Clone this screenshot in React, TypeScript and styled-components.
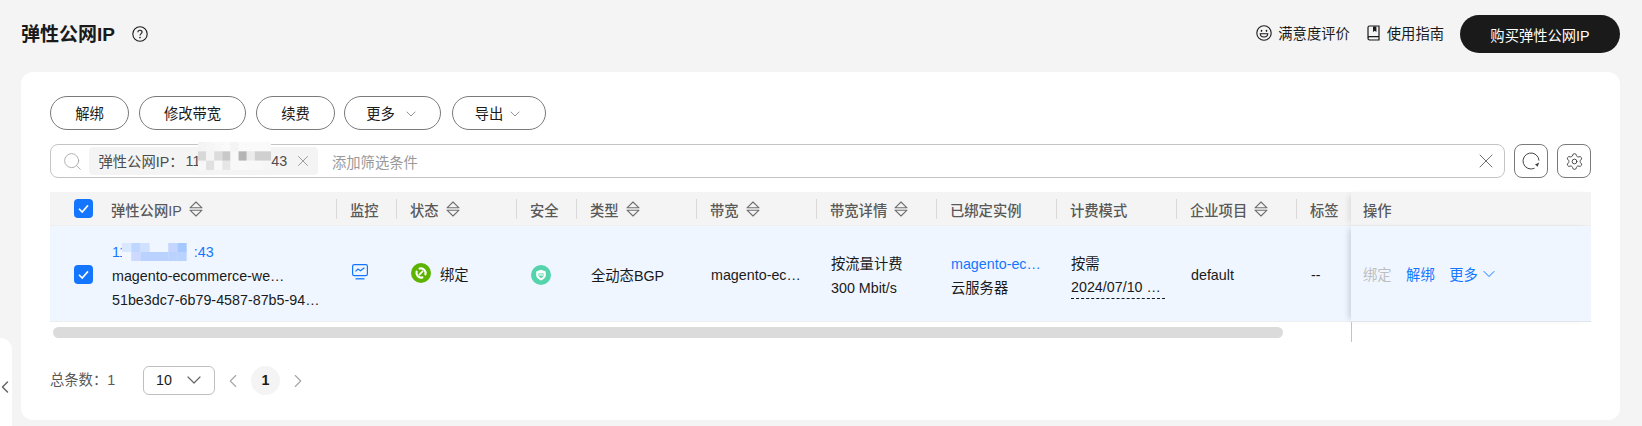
import { createGlobalStyle, styled } from "styled-components";
import { ChevronDown, ChevronLeft, ChevronRight, Search, Settings, X } from "lucide-react";

const GlobalStyle = createGlobalStyle`
html, body {
  margin: 0;
  padding: 0;
  background: #f4f4f4;
}
body {
  font-family: "Liberation Sans", "Noto Sans CJK SC", sans-serif;
  font-size: 14.3px;
  color: #1a1a1a;
}
* {
  box-sizing: border-box;
}
`;

const TAG_MOSAIC = [
  "#f4f4f4", "#f6f6f6", "#f8f8f8", "#fafafa", "#f4f4f4", "#fafafa", "#fafafa", "#fafafa", "#fafafa",
  "#d8d8d8", "#f5f5f5", "#dcdcdc", "#c8c8c8", "#f8f8f8", "#b5b5b5", "#ebebeb", "#d0d0d0", "#d0d0d0",
  "#f7f7f7", "#e0e0e0", "#f8f8f8", "#e6e6e6", "#f8f8f8", "#f9f9f9", "#f8f8f8", "#f8f8f8", "#f6f6f6",
];
const ROW_MOSAIC = [
  "#d9e8ff", "#bfd7ff", "#d0e0ff", "#eff6ff", "#eff6ff", "#c5d5ff", "#a5c8ff", "#f2f6ff",
  "#f3f7ff", "#cfd8ff", "#b9d2ff", "#b9d2ff", "#b9d2ff", "#b9d2ff", "#b9d2ff", "#f0f5ff",
];

const Mosaic = ({ cells, cols, w, h }: { cells: string[]; cols: number; w: number; h: number }) => {
  const rows = Math.ceil(cells.length / cols);
  return (
    <MosaicBox width={w} height={h} viewBox={`0 0 ${cols} ${rows}`} preserveAspectRatio="none">
      {cells.map((c, i) => (
        <rect key={i} x={i % cols} y={Math.floor(i / cols)} width="1.02" height="1.02" fill={c} />
      ))}
    </MosaicBox>
  );
};

const SortIcon = () => (
  <SortSvg width="14" height="16" viewBox="0 0 14 16">
    <path d="M7 1 13 6.8H1Z M1 9.2H13L7 15Z" fill="none" stroke="#6e6e6e" strokeWidth="1.1" strokeLinejoin="round" />
  </SortSvg>
);

const Check = () => (
  <CheckBox>
    <svg width="13" height="13" viewBox="0 0 13 13">
      <path d="M2 6.8 5.2 10 11 3.4" fill="none" stroke="#fff" strokeWidth="1.6" />
    </svg>
  </CheckBox>
);

const columns = [
  { w: 60, label: "监控" },
  { w: 120, label: "状态", sort: true },
  { w: 60, label: "安全" },
  { w: 120, label: "类型", sort: true },
  { w: 120, label: "带宽", sort: true },
  { w: 120, label: "带宽详情", sort: true },
  { w: 120, label: "已绑定实例" },
  { w: 120, label: "计费模式" },
  { w: 120, label: "企业项目", sort: true },
  { w: 54, label: "标签" },
];

const App = () => {
  return (
    <>
      <GlobalStyle />
      <Page>
        <TopBar>
          <TitleGroup>
            <Title>弹性公网IP</Title>
            <svg width="16" height="16" viewBox="0 0 16 16">
              <circle cx="8" cy="8" r="7.2" fill="none" stroke="#1a1a1a" strokeWidth="1.1" />
              <path d="M5.9 6.2C5.9 3.6 10.1 3.6 10.1 6.1 10.1 7.7 8 7.7 8 9.6" fill="none" stroke="#1a1a1a" strokeWidth="1.1" />
              <circle cx="8" cy="11.6" r=".8" fill="#1a1a1a" />
            </svg>
          </TitleGroup>
          <TopActions>
            <TopLink>
              <svg width="16" height="16" viewBox="0 0 16 16">
                <circle cx="8" cy="8" r="7.2" fill="none" stroke="#1a1a1a" strokeWidth="1.1" />
                <ellipse cx="5.5" cy="5.8" rx=".8" ry="1.1" fill="#1a1a1a" />
                <ellipse cx="10.5" cy="5.8" rx=".8" ry="1.1" fill="#1a1a1a" />
                <path d="M4.2 8.8H11.8C11.6 13 4.4 13 4.2 8.8Z" fill="none" stroke="#1a1a1a" strokeWidth="1.1" />
              </svg>
              满意度评价
            </TopLink>
            <TopLink>
              <svg width="15" height="16" viewBox="0 0 15 16">
                <path d="M2 13.2V2.6C2 1.7 2.6 1 3.5 1H13V15H3.6C2.7 15 2 14.2 2 13.2 2 12.2 2.7 11.6 3.6 11.6H13" fill="none" stroke="#1a1a1a" strokeWidth="1.2" />
                <path d="M7 1.5V7L8.7 5.8 10.4 7V1.5Z" fill="#1a1a1a" />
              </svg>
              使用指南
            </TopLink>
            <BuyButton>购买弹性公网IP</BuyButton>
          </TopActions>
        </TopBar>

        <Card>
          <Toolbar>
            <PillButton $w={79}>解绑</PillButton>
            <PillButton $w={107}>修改带宽</PillButton>
            <PillButton $w={79}>续费</PillButton>
            <PillButton $w={97} $shift={-1}>
              更多 <ChevronDown size={16} strokeWidth={1.2} color="#777" />
            </PillButton>
            <PillButton $w={94} $shift={1}>
              导出<ChevronDown size={16} strokeWidth={1.2} color="#777" />
            </PillButton>
          </Toolbar>

          <SearchRow>
            <SearchBox>
              <Search size={21} strokeWidth={1} color="#a6a6a6" />
              <FilterTag>
                <FilterName>弹性公网IP：</FilterName>
                11
                <Mosaic cells={TAG_MOSAIC} cols={9} w={73} h={28} />
                43
                <X size={18} strokeWidth={1} color="#808080" />
              </FilterTag>
              <Placeholder>添加筛选条件</Placeholder>
              <ClearIcon>
                <X size={24} strokeWidth={1} color="#707070" />
              </ClearIcon>
            </SearchBox>
            <IconButton>
              <svg width="20" height="20" viewBox="0 0 20 20">
                <path d="M13.5 17.2A8 8 0 1 1 18 9.6" fill="none" stroke="#444" strokeWidth="1" />
                <path d="M18.2 11.6 16.6 15.8 14 13.6Z" fill="#444" />
              </svg>
            </IconButton>
            <IconButton>
              <Settings size={19} strokeWidth={1.2} color="#444" />
            </IconButton>
          </SearchRow>

          <TableShell>
            <ScrollPart>
              <HeadRow>
                <HeadCell $w={287} $first>
                  <Check />
                  <HeadLabel>弹性公网IP</HeadLabel>
                  <SortIcon />
                </HeadCell>
                {columns.map((c) => (
                  <HeadCell key={c.label} $w={c.w}>
                    <HeadLabel>{c.label}</HeadLabel>
                    {c.sort && <SortIcon />}
                  </HeadCell>
                ))}
              </HeadRow>
              <BodyRow>
                <BodyCell $w={287} $first>
                  <Check />
                  <IpStack>
                    <LinkText>
                      11
                      <Mosaic cells={ROW_MOSAIC} cols={8} w={74} h={18} />
                      :43
                    </LinkText>
                    <span>magento-ecommerce-we…</span>
                    <span>51be3dc7-6b79-4587-87b5-94…</span>
                  </IpStack>
                </BodyCell>
                <BodyCell $w={60}>
                  <MonitorSvg width="16" height="16" viewBox="0 0 16 16">
                    <rect x=".6" y=".6" width="14.8" height="11" rx="1.6" fill="none" stroke="#1476ff" strokeWidth="1.2" />
                    <path d="M3.5 7.4 6 5 8.5 6.8 12.4 3.8" fill="none" stroke="#1476ff" strokeWidth="1.2" />
                    <path d="M3.5 14.8H12.5" stroke="#1476ff" strokeWidth="1.3" />
                  </MonitorSvg>
                </BodyCell>
                <BodyCell $w={120}>
                  <StatusWrap>
                    <svg width="20" height="20" viewBox="0 0 20 20">
                      <circle cx="10" cy="10" r="10" fill="#5cb300" />
                      <path d="M8.6 5.6A4.7 4.7 0 0 1 14.4 11.4 M11.4 14.4A4.7 4.7 0 0 1 5.6 8.6" fill="none" stroke="#fff" strokeWidth="2.1" strokeLinecap="round" />
                      <path d="M8.4 11.6 11.6 8.4" stroke="#fff" strokeWidth="1.6" strokeLinecap="round" />
                    </svg>
                    绑定
                  </StatusWrap>
                </BodyCell>
                <BodyCell $w={60}>
                  <svg width="20" height="20" viewBox="0 0 20 20">
                    <circle cx="10" cy="10" r="10" fill="#55d4ac" />
                    <path d="M10 4.8 14.8 6.4V10C14.8 12.8 12.6 14.4 10 15.4 7.4 14.4 5.2 12.8 5.2 10V6.4Z" fill="#fff" />
                    <path d="M7.2 8.6H12.8V10C12.6 11.4 11.4 12.4 10 13 8.6 12.4 7.4 11.4 7.2 10Z" fill="#55d4ac" />
                    <path d="M7.4 10H12.6" stroke="#fff" strokeWidth="1.2" />
                  </svg>
                </BodyCell>
                <BodyCell $w={120}>全动态BGP</BodyCell>
                <BodyCell $w={120}>magento-ec…</BodyCell>
                <BodyCell $w={120}>
                  <Stack>
                    <span>按流量计费</span>
                    <span>300 Mbit/s</span>
                  </Stack>
                </BodyCell>
                <BodyCell $w={120}>
                  <Stack>
                    <LinkLine>magento-ec…</LinkLine>
                    <span>云服务器</span>
                  </Stack>
                </BodyCell>
                <BodyCell $w={120}>
                  <Stack>
                    <span>按需</span>
                    <DateText>2024/07/10 …</DateText>
                  </Stack>
                </BodyCell>
                <BodyCell $w={120}>default</BodyCell>
                <BodyCell $w={54}>--</BodyCell>
              </BodyRow>
              <ScrollTrack>
                <ScrollThumb />
              </ScrollTrack>
            </ScrollPart>
            <FixedPart>
              <FixedHead>操作</FixedHead>
              <FixedBody>
                <OpDisabled>绑定</OpDisabled>
                <OpLink>解绑</OpLink>
                <OpLink>
                  更多
                  <ChevronDown size={20} strokeWidth={1.2} />
                </OpLink>
              </FixedBody>
              <FixedTail />
            </FixedPart>
          </TableShell>

          <Pager>
            <Total>总条数：1</Total>
            <PageSize>
              10
              <ChevronDown size={24} strokeWidth={1.2} color="#666" />
            </PageSize>
            <PagerArrow>
              <ChevronLeft size={22} strokeWidth={1.2} color="#a6a6a6" />
            </PagerArrow>
            <CurrentPage>1</CurrentPage>
            <PagerArrow>
              <ChevronRight size={22} strokeWidth={1.2} color="#a6a6a6" />
            </PagerArrow>
          </Pager>
        </Card>

        <SideTab>
          <ChevronLeft size={20} strokeWidth={1.8} color="#666" />
        </SideTab>
      </Page>
    </>
  );
};

export default App;

const Page = styled.div`
  position: relative;
  width: 1642px;
  height: 426px;
  overflow: hidden;
  background: #f4f4f4;
`;

const TopBar = styled.div`
  height: 72px;
  padding: 15px 22px 0 21px;
  display: flex;
  justify-content: space-between;
  align-items: flex-start;
`;

const TitleGroup = styled.div`
  height: 38px;
  display: flex;
  align-items: center;
  gap: 17px;
`;

const Title = styled.div`
  font-size: 19px;
  font-weight: 700;
  color: #1a1a1a;
  margin-bottom: 3px;
`;

const TopActions = styled.div`
  display: flex;
  align-items: center;
`;

const TopLink = styled.div`
  display: flex;
  align-items: center;
  gap: 6px;
  margin-right: 16px;
  height: 38px;
  padding-bottom: 3px;
`;

const BuyButton = styled.div`
  width: 160px;
  height: 38px;
  border-radius: 19px;
  background: #1a1a1a;
  color: #fff;
  display: flex;
  align-items: center;
  justify-content: center;
`;

const Card = styled.div`
  margin: 0 22px 0 21px;
  height: 348px;
  padding: 24px 29px 0 29px;
  background: #fff;
  border-radius: 12px;
`;

const Toolbar = styled.div`
  display: flex;
  gap: 10px;
  height: 34px;
`;

const PillButton = styled.div<{ $w: number; $shift?: number }>`
  width: ${(p) => p.$w}px;
  height: 34px;
  margin-left: ${(p) => p.$shift ?? 0}px;
  border: 1px solid #7a7a7a;
  border-radius: 17px;
  display: flex;
  align-items: center;
  justify-content: center;
  gap: 2px;
  white-space: pre;
  padding-bottom: 2px;
  svg {
    margin: 3px 0 0 2px;
  }
`;

const SearchRow = styled.div`
  display: flex;
  gap: 9px;
  height: 34px;
  margin-top: 14px;
`;

const SearchBox = styled.div`
  flex: 1;
  display: flex;
  align-items: center;
  border: 1px solid #c4c4c4;
  border-radius: 8px;
  padding: 0 6px 0 11px;
`;

const FilterTag = styled.div`
  height: 28px;
  margin-left: 6px;
  padding: 0 0 1px 9.5px;
  width: 229px;
  display: flex;
  align-items: center;
  background: #f4f4f4;
  border-radius: 4px;
  color: #4d4d4d;
  white-space: nowrap;
  svg:last-child {
    margin-left: 6.5px;
  }
`;

const FilterName = styled.span`
  margin-right: 2px;
`;

const MosaicBox = styled.svg`
  flex: none;
  ${FilterTag} & {
    margin: 0 0 9px -2px;
  }
`;

const Placeholder = styled.div`
  margin-left: 14px;
  color: #999;
`;

const ClearIcon = styled.div`
  margin-left: auto;
  display: flex;
`;

const IconButton = styled.div`
  flex: none;
  width: 34px;
  height: 34px;
  border: 1px solid #7a7a7a;
  border-radius: 8px;
  display: flex;
  align-items: center;
  justify-content: center;
`;

const TableShell = styled.div`
  display: flex;
  margin-top: 14px;
`;

const ScrollPart = styled.div`
  width: 1301px;
  overflow: hidden;
`;

const HeadRow = styled.div`
  display: flex;
  height: 34px;
  background: #f4f4f4;
  border-bottom: 1px solid #eeeeee;
`;

const SortSvg = styled.svg`
  flex: none;
  margin-left: 7px;
`;

const CheckBox = styled.div`
  flex: none;
  width: 19px;
  height: 19px;
  margin-right: 18px;
  border-radius: 4px;
  background: #1476ff;
  display: flex;
  align-items: center;
  justify-content: center;
`;

const HeadCell = styled.div<{ $w: number; $first?: boolean }>`
  position: relative;
  flex: none;
  width: ${(p) => p.$w}px;
  display: flex;
  align-items: center;
  padding-left: ${(p) => (p.$first ? 24 : 13)}px;
  &:not(:last-child)::after {
    content: "";
    position: absolute;
    right: 0;
    top: 7px;
    height: 20px;
    width: 1px;
    background: #d9d9d9;
  }
`;

const HeadLabel = styled.span`
  font-weight: 500;
  color: #595959;
  white-space: nowrap;
  margin-top: 2px;
`;

const BodyRow = styled.div`
  display: flex;
  height: 96px;
  background: #eff6ff;
  border-bottom: 1px solid #eeeeee;
`;

const BodyCell = styled.div<{ $w: number; $first?: boolean }>`
  flex: none;
  width: ${(p) => p.$w}px;
  display: flex;
  align-items: center;
  padding: 2px 0 0 ${(p) => (p.$first ? 24 : 14)}px;
  white-space: nowrap;
`;

const Stack = styled.div`
  display: flex;
  flex-direction: column;
  line-height: 24px;
  margin-top: 2px;
`;

const IpStack = styled(Stack)`
  margin-left: 1px;
`;

const LinkText = styled.div`
  display: flex;
  align-items: center;
  height: 24px;
  color: #1476ff;
  svg {
    margin: 0 -2px 0 -5px;
  }
`;

const LinkLine = styled.span`
  color: #1476ff;
`;

const MonitorSvg = styled.svg`
  margin: 0 0 6px 1px;
`;

const StatusWrap = styled.div`
  display: flex;
  align-items: center;
  gap: 9px;
  margin-bottom: 2px;
  svg {
    margin-bottom: 2px;
  }
`;

const DateText = styled.span`
  width: 94px;
  height: 23px;
  border-bottom: 1px dashed #1a1a1a;
  line-height: 23px;
  white-space: nowrap;
`;

const ScrollTrack = styled.div`
  padding: 5px 0 0 3px;
  height: 16px;
`;

const ScrollThumb = styled.div`
  width: 1230px;
  height: 11px;
  border-radius: 6px;
  background: #dbdbdb;
`;

const FixedPart = styled.div`
  position: relative;
  width: 240px;
  flex: none;
`;

const FixedHead = styled.div`
  height: 34px;
  display: flex;
  align-items: center;
  padding: 2px 0 0 12px;
  background: #f4f4f4;
  border-bottom: 1px solid #eeeeee;
  font-weight: 500;
  color: #595959;
  box-shadow: -5px 0 6px -3px rgba(0, 0, 0, 0.1);
`;

const FixedBody = styled.div`
  height: 96px;
  display: flex;
  align-items: center;
  gap: 14.5px;
  padding-left: 12px;
  background: #eff6ff;
  border-bottom: 1px solid #e1e6ee;
  box-shadow: -5px 0 6px -3px rgba(0, 0, 0, 0.16);
`;

const FixedTail = styled.div`
  height: 20px;
  width: 1px;
  background: #c4c4c4;
`;

const OpDisabled = styled.span`
  color: #bfbfbf;
`;

const OpLink = styled.span`
  color: #1476ff;
  display: flex;
  align-items: center;
  gap: 1px;
`;

const Pager = styled.div`
  display: flex;
  align-items: center;
  height: 29px;
  margin-top: 24px;
`;

const Total = styled.div`
  width: 93px;
  color: #595959;
  padding-bottom: 4px;
`;

const PageSize = styled.div`
  width: 72px;
  height: 29px;
  border: 1px solid #bfbfbf;
  border-radius: 6px;
  display: flex;
  align-items: center;
  justify-content: space-between;
  padding: 0 8px 2px 12px;
`;

const PagerArrow = styled.div`
  width: 36px;
  display: flex;
  justify-content: center;
`;

const CurrentPage = styled.div`
  width: 29px;
  height: 29px;
  padding-bottom: 2px;
  border-radius: 50%;
  background: #f4f4f4;
  display: flex;
  align-items: center;
  justify-content: center;
  font-weight: 700;
`;

const SideTab = styled.div`
  position: absolute;
  left: 0;
  top: 338px;
  width: 12px;
  height: 88px;
  background: #fff;
  border-top-right-radius: 12px;
  display: flex;
  align-items: center;
  padding: 10px 0 0;
  svg {
    flex: none;
    margin-left: -5px;
  }
`;
